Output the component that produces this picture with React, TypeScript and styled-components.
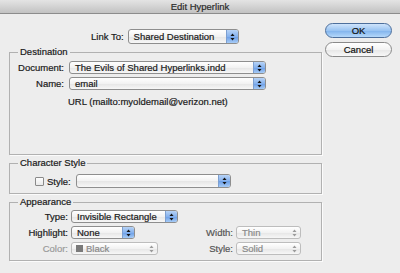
import React from "react";
import styled, { createGlobalStyle } from "styled-components";

const GlobalStyle = createGlobalStyle`
  html, body { margin: 0; padding: 0; background: #ededed; }
  body {
    font-family: "Liberation Sans", Arial, sans-serif;
    font-size: 9.5px;
    color: #1a1a1a;
    -webkit-text-stroke: 0.2px;
  }
`;

const Arrows = ({ off }: { off?: boolean }) => (
  <svg width="5" height="8" viewBox="0 0 5 8">
    <path d="M2.5 0.5 L4.5 3 L0.5 3 Z" fill={off ? "#9a9a9a" : "#111"} />
    <path d="M0.5 5 L4.5 5 L2.5 7.5 Z" fill={off ? "#9a9a9a" : "#111"} />
  </svg>
);

type SelectProps = { w: number; h?: number; off?: boolean; swatch?: boolean; children?: React.ReactNode };

const PopUp = ({ w, h, off, swatch, children }: SelectProps) => (
  <Select $w={w} $h={h} $off={off}>
    {swatch && <Swatch />}
    <SelectText>{children}</SelectText>
    <Stepper $off={off}>
      <Arrows off={off} />
    </Stepper>
  </Select>
);

const App = () => {
  return (
    <Window>
      <GlobalStyle />
      <TitleBar>Edit Hyperlink</TitleBar>
      <Body>
        <Main>
          <LinkRow>
            <Label>Link To:</Label>
            <PopUp w={111} h={15}>Shared Destination</PopUp>
          </LinkRow>

          <Group $pt={3} $pb={47}>
            <Legend>Destination</Legend>
            <DestGrid>
              <Label $right>Document:</Label>
              <PopUp w={197}>The Evils of Shared Hyperlinks.indd</PopUp>
              <Label $right>Name:</Label>
              <PopUp w={197}>email</PopUp>
              <Url>URL (mailto:myoldemail@verizon.net)</Url>
            </DestGrid>
          </Group>

          <Group $pt={5} $pb={5}>
            <Legend>Character Style</Legend>
            <StyleRow>
              <Check />
              <Label>Style:</Label>
              <PopUp w={155} h={14} />
            </StyleRow>
          </Group>

          <Group $pt={2} $pb={5}>
            <Legend>Appearance</Legend>
            <AppearGrid>
              <Label $right>Type:</Label>
              <PopUp w={107}>Invisible Rectangle</PopUp>
              <Spacer />
              <Spacer />
              <Label $right>Highlight:</Label>
              <PopUp w={64}>None</PopUp>
              <Label $right $tone="#555">Width:</Label>
              <PopUp w={65} off>Thin</PopUp>
              <Label $right $tone="#9a9a9a">Color:</Label>
              <PopUp w={87} off swatch>Black</PopUp>
              <Label $right $tone="#555">Style:</Label>
              <PopUp w={65} off>Solid</PopUp>
            </AppearGrid>
          </Group>
        </Main>
        <Side>
          <Button $primary>OK</Button>
          <Button>Cancel</Button>
        </Side>
      </Body>
    </Window>
  );
};

export default App;

const Window = styled.div`
  width: 400px;
  height: 273px;
  overflow: hidden;
  background: #ededed;
  display: flex;
  flex-direction: column;
`;

const TitleBar = styled.div`
  height: 14px;
  box-sizing: border-box;
  border-bottom: 1px solid #8c8c8c;
  background: linear-gradient(#e4e4e4, #c2c2c2);
  display: flex;
  align-items: center;
  justify-content: center;
  color: #2a2a2a;
`;

const Body = styled.div`
  display: flex;
  padding-left: 9px;
`;

const Main = styled.div`
  width: 313px;
  display: flex;
  flex-direction: column;
`;

const Side = styled.div`
  margin-left: 3px;
  padding-top: 9px;
  width: 67px;
  display: flex;
  flex-direction: column;
  gap: 4px;
`;

const Button = styled.div<{ $primary?: boolean }>`
  height: 15px;
  box-sizing: border-box;
  border-radius: 8px;
  border: 1px solid ${p => (p.$primary ? "#4d6f9c" : "#8a8a8a")};
  background: ${p =>
    p.$primary
      ? "linear-gradient(#cfe4fb, #9ac4f2 50%, #7fb2ec 51%, #b5d8fa)"
      : "linear-gradient(#ffffff, #f3f3f3 50%, #e6e6e6 51%, #f8f8f8)"};
  display: flex;
  align-items: center;
  justify-content: center;
  color: #111;
`;

const LinkRow = styled.div`
  display: flex;
  align-items: center;
  gap: 4px;
  margin-top: 15px;
  padding-left: 82px;
`;

const Label = styled.span<{ $right?: boolean; $tone?: string }>`
  white-space: nowrap;
  text-align: ${p => (p.$right ? "right" : "left")};
  color: ${p => p.$tone ?? "#1a1a1a"};
`;

const Group = styled.fieldset<{ $pt: number; $pb: number }>`
  margin: 2px 0 0;
  padding: ${p => p.$pt}px 8px ${p => p.$pb}px;
  border: 1px solid #b1b1b1;
  box-shadow: 1px 1px 0 #fbfbfb;
  min-width: 0;
`;

const Legend = styled.legend`
  padding: 0 2px;
  line-height: 12px;
`;

const DestGrid = styled.div`
  display: grid;
  grid-template-columns: 46px 197px;
  column-gap: 5px;
  row-gap: 3px;
  align-items: center;
`;

const Url = styled.div`
  grid-column: 2;
  margin-left: -1px;
  margin-top: 3px;
`;

const StyleRow = styled.div`
  display: flex;
  align-items: center;
  padding-left: 17px;
  gap: 3px;
  & > :last-child { margin-left: 2px; }
`;

const Check = styled.span`
  width: 9px;
  height: 9px;
  box-sizing: border-box;
  border: 1px solid #8a8a8a;
  border-radius: 1px;
  background: linear-gradient(#fdfdfd, #e9e9e9);
`;

const AppearGrid = styled.div`
  display: grid;
  grid-template-columns: 50px 126px 33px 65px;
  column-gap: 3px;
  row-gap: 3px;
  align-items: center;
  justify-items: start;
  & > span { justify-self: end; }
`;

const Spacer = styled.div``;

const Select = styled.div<{ $w: number; $h?: number; $off?: boolean }>`
  width: ${p => p.$w}px;
  height: ${p => p.$h ?? 13}px;
  box-sizing: border-box;
  display: flex;
  align-items: center;
  border: 1px solid ${p => (p.$off ? "#bdbdbd" : "#8e8e8e")};
  border-radius: 3px;
  background: linear-gradient(#ffffff, #f2f2f2 50%, #e5e5e5 51%, #f7f7f7);
  color: ${p => (p.$off ? "#8a8a8a" : "#1a1a1a")};
  overflow: hidden;
`;

const SelectText = styled.span`
  flex: 1;
  padding-left: 5px;
  white-space: nowrap;
  overflow: hidden;
`;

const Stepper = styled.span<{ $off?: boolean }>`
  width: 11px;
  align-self: stretch;
  display: flex;
  align-items: center;
  justify-content: center;
  background: ${p => (p.$off ? "transparent" : "linear-gradient(#b7d3f6, #86b2ee 50%, #6a9de6 51%, #a6cbf6)")};
  border-left: 1px solid ${p => (p.$off ? "transparent" : "#7c9fd0")};
`;

const Swatch = styled.span`
  width: 7px;
  height: 7px;
  margin-left: 4px;
  margin-right: -2px;
  background: #7a7a7a;
`;
